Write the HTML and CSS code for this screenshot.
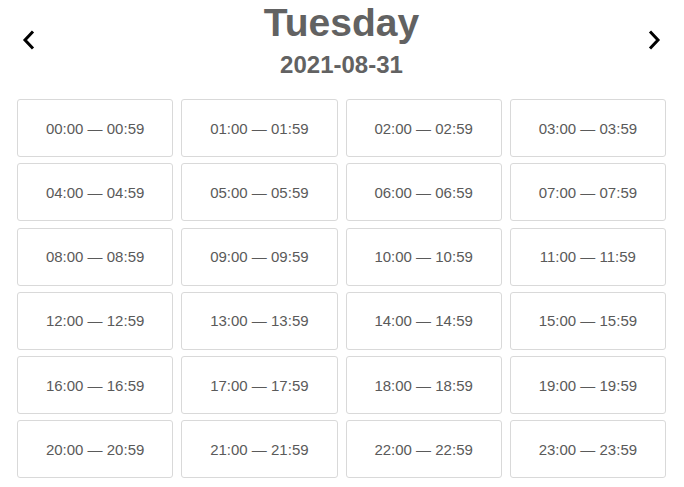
FILE: index.html
```html
<!DOCTYPE html>
<html lang="en">
<head>
  <meta charset="UTF-8" />
  <meta name="viewport" content="width=device-width, initial-scale=1.0" />
  <title>Day slots</title>
  <link rel="stylesheet" href="styles.css">
</head>
<body>
  <!-- Intestazione con navigazione -->
  <div class="day-header">
    <button class="nav-button" aria-label="Previous day">
      <svg width="14" height="20" viewBox="0 0 14 20"><path d="M11 1.5 L3 10 L11 18.5" fill="none" stroke="#000" stroke-width="3"/></svg>
    </button>
    <div class="day-title">
      <h1>Tuesday</h1>
      <h2>2021-08-31</h2>
    </div>
    <button class="nav-button" aria-label="Next day">
      <svg width="14" height="20" viewBox="0 0 14 20"><path d="M3 1.5 L11 10 L3 18.5" fill="none" stroke="#000" stroke-width="3"/></svg>
    </button>
  </div>

  <!-- Griglia delle ore -->
  <div class="slots" id="slots"></div>

  <script>
    const slots = document.getElementById("slots");
    for (let h = 0; h < 24; h++) {
      const hh = String(h).padStart(2, "0");
      const slot = document.createElement("div");
      slot.classList.add("slot");
      slot.textContent = `${hh}:00 \u2014 ${hh}:59`;
      slots.appendChild(slot);
    }
  </script>
</body>
</html>
```

FILE: styles.css
```css
body {
  margin: 0;
  background-color: #fff;
  font-family: "Liberation Sans", Arial, sans-serif;
  color: #606060;
}

.day-header {
  display: flex;
  align-items: flex-start;
  justify-content: space-between;
  box-sizing: border-box;
  height: 99px;
  padding: 3px 20px 0 19px;
}

.nav-button {
  background: none;
  border: none;
  padding: 0;
  width: 20px;
  height: 24px;
  display: flex;
  align-items: center;
  justify-content: center;
  cursor: pointer;
  margin-top: 25px;
}

.day-title {
  text-align: center;
}

.day-title h1 {
  margin: 0;
  font-size: 39px;
  line-height: 39px;
  color: #626262;
}

.day-title h2 {
  margin: 11px 0 0;
  font-size: 24px;
  line-height: 24px;
  color: #626262;
}

.slots {
  display: grid;
  grid-template-columns: repeat(4, 1fr);
  grid-auto-rows: 58px;
  gap: 6.25px 8px;
  padding: 0 18px 0 17px;
}

.slot {
  border: 1px solid #d9d9d9;
  border-radius: 3px;
  display: flex;
  align-items: center;
  justify-content: center;
  font-size: 15px;
  color: #5a5a5a;
}
```
